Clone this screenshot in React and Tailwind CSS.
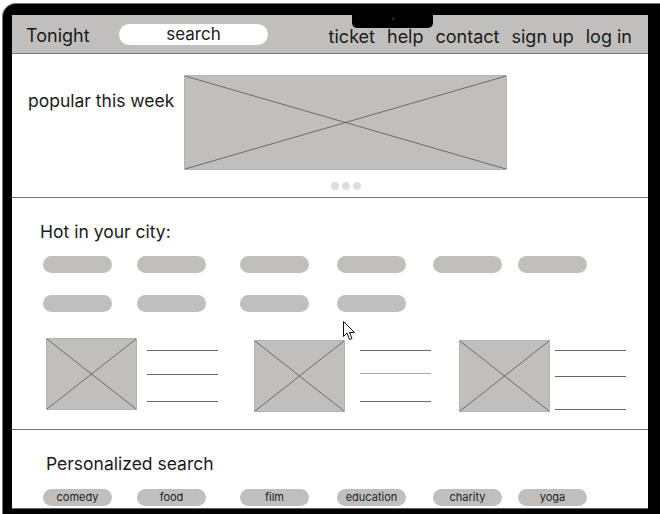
const NAV = ['ticket', 'help', 'contact', 'sign up', 'log in']
const PILL_X = ['ml-[31px]', 'ml-[25px]', 'ml-[34px]', 'ml-[28px]', 'ml-[27px]', 'ml-[16px]']
const TAGS = ['comedy', 'food', 'film', 'education', 'charity', 'yoga']

function Placeholder({ className }) {
  return (
    <div className={`relative bg-[#c0bfbd] border border-[#b4b3b1] ${className}`}>
      <svg className="absolute inset-0 w-full h-full" preserveAspectRatio="none" viewBox="0 0 100 100">
        <line x1="0" y1="0" x2="100" y2="100" stroke="#555" strokeWidth="0.8" vectorEffect="non-scaling-stroke" />
        <line x1="100" y1="0" x2="0" y2="100" stroke="#555" strokeWidth="0.8" vectorEffect="non-scaling-stroke" />
      </svg>
    </div>
  )
}

function Pill({ className = '', children }) {
  return (
    <div className={`w-[69px] h-[17px] rounded-full bg-[#c0bfbd] flex items-center justify-center text-[11px] text-[#222] ${className}`}>
      {children}
    </div>
  )
}

function Card({ className, gap, lines, faint }) {
  return (
    <div className={`flex items-start ${className}`}>
      <Placeholder className="w-[91px] h-[72px]" />
      <div className={`${gap} flex flex-col w-[71px]`}>
        {lines.map((y, i) => (
          <div key={i} className={`h-px ${faint === i ? 'bg-[#aaa]' : 'bg-[#666]'}`} style={{ marginTop: y }} />
        ))}
      </div>
    </div>
  )
}

export default function App() {
  return (
    <div className="w-[660px] h-[514px] overflow-hidden bg-white relative" style={{ fontFamily: 'Inter, "Noto Sans", sans-serif' }}>
      <div className="ml-[2px] mt-[3px] w-[680px] h-[530px] bg-black border-l border-t border-[#777] rounded-tl-[14px] pt-[11px] pl-[9px]">
        <div className="relative w-[636px] h-[494px] bg-white border-b border-[#666] text-[#1a1a1a]">
          {/* notch */}
          <div className="absolute left-[340px] top-0 w-[81px] h-[13px] bg-black rounded-b-[5px] flex justify-center">
            <div className="mt-[2px] ml-[1px] w-[3px] h-[3px] rounded-full bg-[#1e2a44]" />
          </div>

          <nav className="h-[39px] bg-[#c0bfbd] border-b border-[#7a7a7a] flex items-center text-[18px]">
            <span className="pl-[14px] w-[107px] leading-none pt-[4px]">Tonight</span>
            <div className="w-[149px] h-[21px] mt-[1px] rounded-full bg-white flex items-center justify-center text-[17px] leading-none">
              search
            </div>
            <div className="ml-auto pr-[16px] flex gap-[12px] leading-none pt-[6px]">
              {NAV.map((n) => (
                <span key={n}>{n}</span>
              ))}
            </div>
          </nav>

          <section className="h-[144px] border-b border-[#777] flex">
            <p className="pl-[16px] pt-[38px] w-[172px] text-[17.5px] leading-none">popular this week</p>
            <div className="pt-[21px] flex flex-col items-center">
              <Placeholder className="w-[323px] h-[95px]" />
              <div className="mt-[12px] flex gap-[3px]">
                <span className="w-[8px] h-[8px] rounded-full bg-[#ddd]" />
                <span className="w-[8px] h-[8px] rounded-full bg-[#ddd]" />
                <span className="w-[8px] h-[8px] rounded-full bg-[#ddd]" />
              </div>
            </div>
          </section>

          <section className="h-[232px] border-b border-[#777]">
            <p className="pl-[28px] pt-[25px] text-[17.5px] leading-none">Hot in your city:</p>
            <div className="mt-[15px] flex">
              {PILL_X.map((m, i) => (
                <Pill key={i} className={m} />
              ))}
            </div>
            <div className="mt-[22px] flex">
              {PILL_X.slice(0, 4).map((m, i) => (
                <Pill key={i} className={m} />
              ))}
            </div>
            <div className="mt-[26px] flex">
              <Card className="ml-[34px]" gap="ml-[10px]" lines={[12, 23, 26]} />
              <Card className="ml-[36px] mt-[2px]" gap="ml-[15px]" lines={[10, 22, 27]} faint={1} />
              <Card className="ml-[28px] mt-[2px]" gap="ml-[5px]" lines={[10, 25, 32]} />
            </div>
          </section>

          <section>
            <p className="pl-[34px] pt-[25px] text-[17.5px] leading-none">Personalized search</p>
            <div className="mt-[16px] flex">
              {TAGS.map((t, i) => (
                <Pill key={t} className={PILL_X[i]}>
                  {t}
                </Pill>
              ))}
            </div>
          </section>
        </div>
      </div>

      {/* mouse cursor */}
      <svg className="absolute left-[343px] top-[321px]" width="13" height="20" viewBox="0 0 13 20">
        <path d="M0.5 0.5 L0.5 15.5 L4 12 L6.5 18.5 L9 17.5 L6.5 11.5 L11.5 11.5 Z" fill="#fff" stroke="#111" strokeWidth="1" strokeLinejoin="round" />
      </svg>
    </div>
  )
}
